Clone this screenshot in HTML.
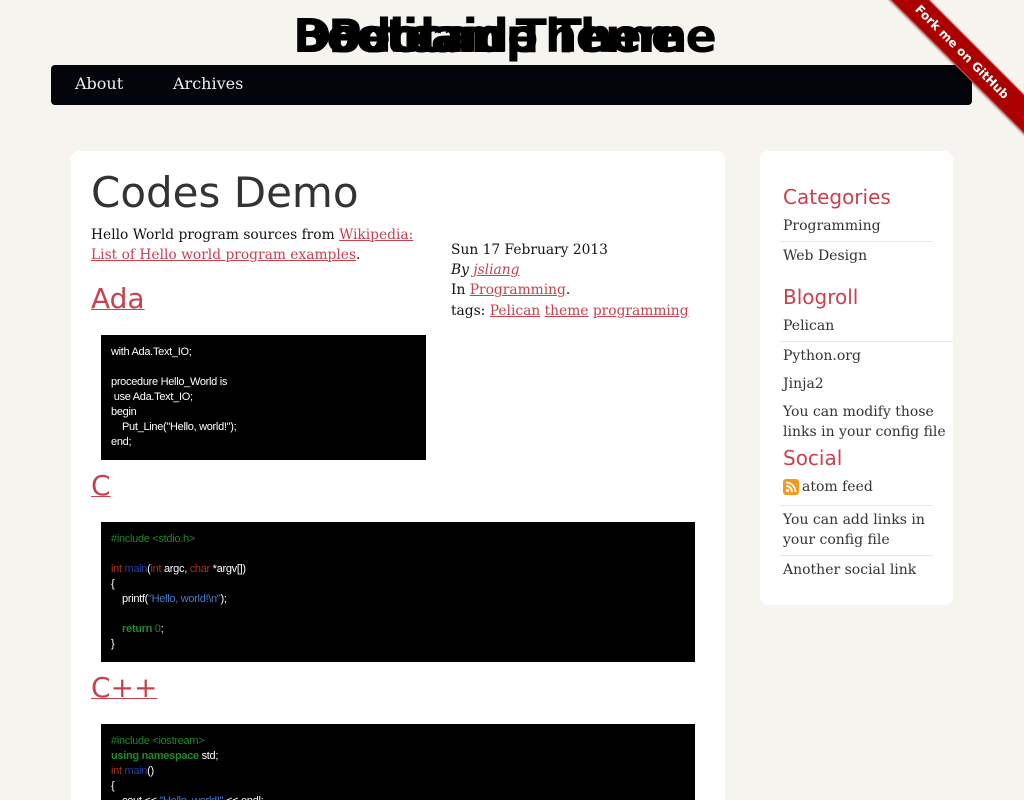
<!DOCTYPE html>
<html><head><meta charset="utf-8"><style>
*{margin:0;padding:0;box-sizing:border-box}
html,body{width:1024px;height:800px;overflow:hidden}
body{background:#f5f4ef;font-family:"DejaVu Serif","Liberation Serif",serif;font-size:13.8px;color:#111;position:relative}
.abs{position:absolute;white-space:nowrap}
a{color:#c8414f;text-decoration:underline}
.title{position:absolute;top:8px;left:0;width:1024px;height:56px;font-family:"DejaVu Sans","Liberation Sans",sans-serif;font-weight:bold;font-size:46px;letter-spacing:-2px;color:#000;line-height:56px}
.title span{position:absolute;left:0;width:1008px;text-align:center}
.nav{position:absolute;left:51px;top:65px;width:921px;height:40px;background:#03050a;border-radius:4px}
.nav span{position:absolute;top:9px;color:#eee;font-size:16px}
.card{position:absolute;background:#fff;border-radius:8px}
.sans{font-family:"DejaVu Sans","Liberation Sans",sans-serif}
pre{position:absolute;background:#000;color:#fff;font-family:"Liberation Sans",sans-serif;font-size:11px;line-height:15px;padding:10px 10px;letter-spacing:-0.3px;overflow:hidden}
.g{color:#1a8a2a}.r{color:#b0301c}.b{color:#2a3fa0}.s{color:#4a7ac8}.gb{color:#1f8a2a;font-weight:bold}
.h2{font-family:"DejaVu Sans",sans-serif;font-size:28px;color:#c8414f;text-decoration:underline;text-decoration-thickness:1px}
.side{color:#333;font-size:14px}
.sh{font-family:"DejaVu Sans",sans-serif;font-size:20px;color:#c8414f}
.hr{position:absolute;height:1px;background:#eee4e6}
</style></head><body>
<div class="title"><span>Pelican Theme</span><span>Dodolaide Theme</span><span>Bootcamp Theme</span></div>
<div class="nav"><span style="left:24px">About</span><span style="left:122px">Archives</span></div>
<div style="position:absolute;left:852px;top:38px;width:220px;height:28px;background:#a00;transform:rotate(45deg);color:#fff;font-family:'DejaVu Sans',sans-serif;font-weight:bold;font-size:12px;text-align:center;line-height:26px;border-top:1px solid #d55;border-bottom:1px solid #d55;box-shadow:0 1px 2px rgba(0,0,0,.4)">Fork me on GitHub</div>

<div class="card" style="left:71px;top:151px;width:654px;height:649px;border-bottom-left-radius:0;border-bottom-right-radius:0"></div>
<div class="abs sans" style="left:91px;top:168px;font-size:42px;color:#333">Codes Demo</div>
<div class="abs" style="left:91px;top:227px">Hello World program sources from <a>Wikipedia:</a></div>
<div class="abs" style="left:91px;top:247px"><a>List of Hello world program examples</a>.</div>
<div class="abs" style="left:451px;top:242px">Sun 17 February 2013</div>
<div class="abs" style="left:451px;top:262px"><i>By</i> <a><i>jsliang</i></a></div>
<div class="abs" style="left:451px;top:282px">In <a>Programming</a>.</div>
<div class="abs" style="left:451px;top:303px">tags: <a>Pelican</a> <a>theme</a> <a>programming</a></div>
<div class="abs h2" style="left:91px;top:282px">Ada</div>
<pre style="left:101px;top:335px;width:325px;height:125px">with Ada.Text_IO;

procedure Hello_World is
 use Ada.Text_IO;
begin
    Put_Line("Hello, world!");
end;</pre>
<div class="abs h2" style="left:91px;top:469px">C</div>
<pre style="left:101px;top:522px;width:594px;height:140px"><span class="g">#include &lt;stdio.h&gt;</span>

<span class="r">int</span> <span class="b">main</span>(<span class="r">int</span> argc, <span class="r">char</span> *argv[])
{
    printf(<span class="s">"Hello, world!\n"</span>);

    <span class="gb">return</span> <span class="g">0</span>;
}</pre>
<div class="abs h2" style="left:91px;top:671px">C++</div>
<pre style="left:101px;top:724px;width:594px;height:76px"><span class="g">#include &lt;iostream&gt;</span>
<span class="gb">using namespace</span> std;
<span class="r">int</span> <span class="b">main</span>()
{
    cout &lt;&lt; <span class="s">"Hello, world!"</span> &lt;&lt; endl;</pre>

<div class="card" style="left:760px;top:151px;width:193px;height:454px"></div>
<div class="abs sh" style="left:783px;top:185px">Categories</div>
<div class="abs side" style="left:783px;top:218px">Programming</div>
<div class="hr" style="left:780px;top:241px;width:153px"></div>
<div class="abs side" style="left:783px;top:248px">Web Design</div>
<div class="abs sh" style="left:783px;top:285px">Blogroll</div>
<div class="abs side" style="left:783px;top:318px">Pelican</div>
<div class="hr" style="left:780px;top:341px;width:173px"></div>
<div class="abs side" style="left:783px;top:348px">Python.org</div>
<div class="abs side" style="left:783px;top:376px">Jinja2</div>
<div class="abs side" style="left:783px;top:404px">You can modify those</div>
<div class="abs side" style="left:783px;top:424px">links in your config file</div>
<div class="abs sh" style="left:783px;top:446px">Social</div>
<div class="abs" style="left:783px;top:479px;width:16px;height:16px;border-radius:3px;background:#f39a1e"><svg width="16" height="16" viewBox="0 0 16 16"><circle cx="4.5" cy="11.5" r="1.6" fill="#fff"/><path d="M3 7a6 6 0 0 1 6 6M3 3.5a9.5 9.5 0 0 1 9.5 9.5" stroke="#fff" stroke-width="1.8" fill="none"/></svg></div>
<div class="abs side" style="left:802px;top:479px">atom feed</div>
<div class="hr" style="left:780px;top:505px;width:153px"></div>
<div class="abs side" style="left:783px;top:512px">You can add links in</div>
<div class="abs side" style="left:783px;top:532px">your config file</div>
<div class="hr" style="left:780px;top:555px;width:153px"></div>
<div class="abs side" style="left:783px;top:562px">Another social link</div>
</body></html>
